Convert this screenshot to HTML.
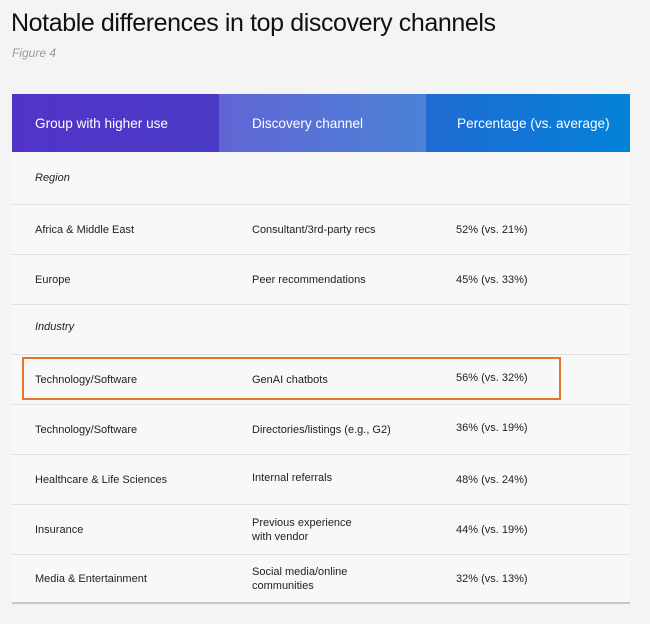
<!DOCTYPE html>
<html><head><style>
body{margin:0;width:650px;height:624px;background:#f4f4f4;font-family:"Liberation Sans",sans-serif;position:relative;overflow:hidden}
h1{position:absolute;left:11px;top:9px;margin:0;font-weight:400;font-size:25px;color:#111;letter-spacing:-0.4px}
.fig{position:absolute;left:12px;top:46px;font-size:12px;font-style:italic;color:#999}
.hdr{position:absolute;left:12px;top:94px;width:618px;height:58px;display:flex;color:#fff;font-size:13.6px}
.hdr div{height:58px;line-height:60px;box-sizing:border-box}
.h1c{width:207px;padding-left:23px;background:linear-gradient(90deg,#5233c8,#4a3bc6)}
.h2c{width:207px;padding-left:33px;background:linear-gradient(90deg,#6165d3,#4b82d8)}
.h3c{width:204px;padding-left:31px;background:linear-gradient(90deg,#1f6ad3,#0382d8)}
.row{position:absolute;left:12px;width:618px;border-bottom:1px solid #e2e2e2;background:#f8f8f8;font-size:11px;color:#222}
.row span{position:absolute;top:50%;transform:translateY(-50%);line-height:14px}
.a{left:23px}.b{left:240px}.c{left:444px}
.hl{position:absolute;left:22px;top:357px;width:539px;height:43px;border:2px solid #e8732f;box-sizing:border-box}
</style></head><body>
<h1>Notable differences in top discovery channels</h1>
<div class="fig">Figure 4</div>
<div class="hdr"><div class="h1c">Group with higher use</div><div class="h2c">Discovery channel</div><div class="h3c">Percentage (vs. average)</div></div>
<div class="row" style="top:152px;height:52px"><span class="a" style="font-style:italic">Region</span></div>
<div class="row" style="top:205px;height:49px"><span class="a">Africa &amp; Middle East</span><span class="b">Consultant/3rd-party recs</span><span class="c">52% (vs. 21%)</span></div>
<div class="row" style="top:255px;height:49px"><span class="a">Europe</span><span class="b">Peer recommendations</span><span class="c">45% (vs. 33%)</span></div>
<div class="row" style="top:305px;height:49px"><span class="a" style="font-style:italic;top:44%">Industry</span></div>
<div class="row" style="top:355px;height:49px"><span class="a">Technology/Software</span><span class="b">GenAI chatbots</span><span class="c" style="top:46%">56% (vs. 32%)</span></div>
<div class="row" style="top:405px;height:49px"><span class="a">Technology/Software</span><span class="b">Directories/listings (e.g., G2)</span><span class="c" style="top:46%">36% (vs. 19%)</span></div>
<div class="row" style="top:455px;height:49px"><span class="a">Healthcare &amp; Life Sciences</span><span class="b" style="top:46%">Internal referrals</span><span class="c">48% (vs. 24%)</span></div>
<div class="row" style="top:505px;height:49px"><span class="a">Insurance</span><span class="b">Previous experience<br>with vendor</span><span class="c">44% (vs. 19%)</span></div>
<div class="row" style="top:555px;height:47px;border-bottom:2px solid #c8c8c8"><span class="a">Media &amp; Entertainment</span><span class="b">Social media/online<br>communities</span><span class="c">32% (vs. 13%)</span></div>
<div class="hl"></div>
</body></html>
